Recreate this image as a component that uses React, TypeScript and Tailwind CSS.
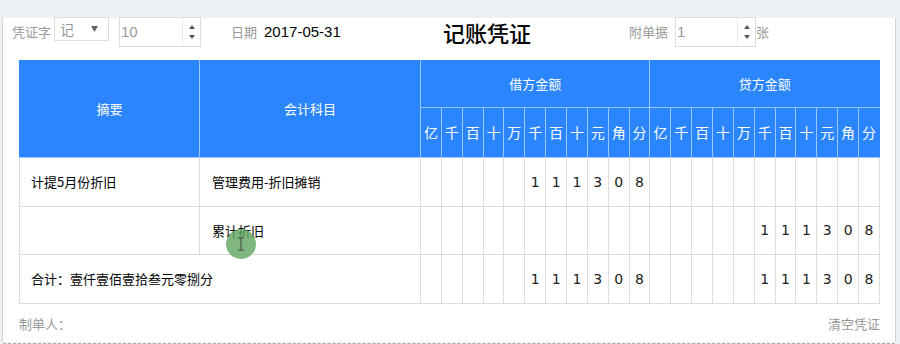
import React from "react";

const units = ["亿", "千", "百", "十", "万", "千", "百", "十", "元", "角", "分"];

function digitsFor(v: string | null): string[] {
  const arr = Array(11).fill("");
  if (!v) return arr;
  const s = v.split("");
  for (let i = 0; i < s.length; i++) arr[11 - s.length + i] = s[i];
  return arr;
}

function Spinner() {
  return (
    <div className="flex w-[18px] flex-col items-center justify-center gap-[6px] border-l border-[#e8e8e8]">
      <svg width="6" height="4" viewBox="0 0 6 4"><path d="M3 0 L6 4 L0 4 Z" fill="#555" /></svg>
      <svg width="6" height="4" viewBox="0 0 6 4"><path d="M0 0 L6 0 L3 4 Z" fill="#555" /></svg>
    </div>
  );
}

export default function App() {
  const rows: { summary: string; account: string; debit: string | null; credit: string | null }[] = [
    { summary: "计提5月份折旧", account: "管理费用-折旧摊销", debit: "111308", credit: null },
    { summary: "", account: "累计折旧", debit: null, credit: "111308" },
  ];
  const font = { fontFamily: '"Microsoft YaHei", "Noto Sans CJK SC", "Noto Sans", sans-serif' };
  const numFont = { fontFamily: '"Liberation Sans", "Noto Sans", sans-serif' };
  const digitFont = { fontFamily: '"DejaVu Sans", "Liberation Sans", sans-serif' };
  const hb = "border border-[#9cc6ff]";
  const bb = "border border-[#dcdcdc]";
  return (
    <div className="relative h-[344px] w-[900px] overflow-hidden bg-[#eef1f4]" style={font}>
      <div className="ml-[2px] mt-[18px] h-[324px] w-[894px] border-x border-[#d4d4d4] bg-white">
        {/* top bar */}
        <div className="relative flex h-[30px] items-start text-[13px]">
          <span className="ml-[9px] mt-[4px] text-[#999]">凭证字</span>
          <div className="ml-[3px] mt-[-1px] flex h-[24px] w-[55px] items-center justify-between border border-[#ddd] px-[5px] text-[#999]">
            <span className="text-[14px]">记</span>
            <svg width="7" height="6" viewBox="0 0 7 6" className="mr-[5px]"><path d="M0 0 L7 0 L3.5 6 Z" fill="#666" /></svg>
          </div>
          <div className="ml-[10px] mt-[-1px] flex h-[30px] w-[82px] border border-[#ddd]">
            <div className="flex-1 pl-[1px] pt-[3px] text-[15px] text-[#999]" style={numFont}>10</div>
            <Spinner />
          </div>
          <span className="ml-[30px] mt-[4px] text-[#999]">日期</span>
          <span className="ml-[7px] mt-[3px] text-[15px] text-black" style={numFont}>2017-05-31</span>
          <span className="absolute left-[440px] top-[-2px] text-[22px] font-medium text-black">记账凭证</span>
          <span className="absolute left-[626px] top-[4px] text-[#999]">附单据</span>
          <div className="absolute left-[672px] top-[-1px] flex h-[30px] w-[81px] border border-[#ddd]">
            <div className="flex-1 pl-[1px] pt-[3px] text-[15px] text-[#999]" style={numFont}>1</div>
            <Spinner />
          </div>
          <span className="absolute left-[753px] top-[4px] text-[#999]">张</span>
        </div>
        {/* table */}
        <div className="ml-[16px] mt-[12px] w-[861px]">
          <table className="w-full table-fixed border-collapse text-[13px]">
            <colgroup>
              <col style={{ width: 180 }} />
              <col style={{ width: 221 }} />
              {Array.from({ length: 22 }).map((_, i) => (
                <col key={i} />
              ))}
            </colgroup>
            <thead className="bg-[#2b85ff] text-white">
              <tr className="h-[47px]">
                <th rowSpan={2} className={`${hb} border-l-[#2b85ff] border-t-[#2b85ff] font-normal`}>摘要</th>
                <th rowSpan={2} className={`${hb} border-t-[#2b85ff] font-normal`}>会计科目</th>
                <th colSpan={11} className={`${hb} border-t-[#2b85ff] font-normal`}>借方金额</th>
                <th colSpan={11} className={`${hb} border-t-[#2b85ff] border-r-[#2b85ff] font-normal`}>贷方金额</th>
              </tr>
              <tr className="h-[50px]">
                {[...units, ...units].map((u, i) => (
                  <th key={i} className={`${hb} ${i === 21 ? "border-r-[#2b85ff]" : ""} p-0 text-[14px] font-normal`}>{u}</th>
                ))}
              </tr>
            </thead>
            <tbody className="text-black">
              {rows.map((r, ri) => (
                <tr key={ri} className={ri === 0 ? "h-[49px]" : "h-[48px]"}>
                  <td className={`${bb} pl-[11px]`}>{r.summary}</td>
                  <td className={`${bb} pl-[12px]`}>{r.account}</td>
                  {[...digitsFor(r.debit), ...digitsFor(r.credit)].map((d, i) => (
                    <td key={i} className={`${bb} p-0 text-center text-[14px] text-[#222]`} style={digitFont}>{d}</td>
                  ))}
                </tr>
              ))}
              <tr className="h-[49px]">
                <td colSpan={2} className={`${bb} pl-[11px]`}>合计：壹仟壹佰壹拾叁元零捌分</td>
                {[...digitsFor("111308"), ...digitsFor("111308")].map((d, i) => (
                  <td key={i} className={`${bb} p-0 text-center text-[14px] text-[#222]`} style={digitFont}>{d}</td>
                ))}
              </tr>
            </tbody>
          </table>
        </div>
        {/* footer */}
        <div className="ml-[16px] mt-[10px] flex w-[861px] justify-between text-[13px] text-[#999]">
          <span>制单人：</span>
          <span>清空凭证</span>
        </div>
        <div className="mt-[9px] border-b border-dashed border-[#aaa]" />
      </div>
      {/* cursor highlight */}
      <div className="absolute left-[226px] top-[229px] flex h-[30px] w-[30px] items-center justify-center rounded-full bg-[#5fa55f]/80">
        <svg width="8" height="14" viewBox="0 0 8 14"><path d="M1 1 H7 M4 1 V13 M1 13 H7" stroke="#444" strokeWidth="1" fill="none" /></svg>
      </div>
    </div>
  );
}
